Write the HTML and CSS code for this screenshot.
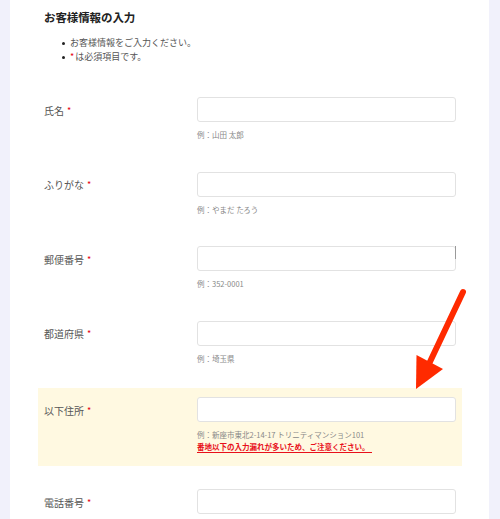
FILE: index.html
```html
<!DOCTYPE html>
<html lang="ja">
<head>
<meta charset="utf-8">
<link rel="stylesheet" href="styles.css">
</head>
<body>
<div class="panel">
  <h2 class="title">お客様情報の入力</h2>
  <ul class="notes">
    <li>お客様情報をご入力ください。</li>
    <li><span class="req">*</span>は必須項目です。</li>
  </ul>
  <div class="form">
    <div class="row">
      <div class="label">氏名<span class="req">*</span></div>
      <div class="field">
        <div class="input"></div>
        <div class="hint">例：山田 太郎</div>
      </div>
    </div>
    <div class="row">
      <div class="label">ふりがな<span class="req">*</span></div>
      <div class="field">
        <div class="input"></div>
        <div class="hint">例：やまだ たろう</div>
      </div>
    </div>
    <div class="row">
      <div class="label">郵便番号<span class="req">*</span></div>
      <div class="field">
        <div class="input caret"></div>
        <div class="hint">例：352-0001</div>
      </div>
    </div>
    <div class="row">
      <div class="label">都道府県<span class="req">*</span></div>
      <div class="field">
        <div class="input"></div>
        <div class="hint">例：埼玉県</div>
      </div>
    </div>
    <div class="row highlight">
      <div class="label">以下住所<span class="req">*</span></div>
      <div class="field">
        <div class="input"></div>
        <div class="hint">例：新座市東北2-14-17 トリニティマンション101</div>
        <div class="warn"><span>番地以下の入力漏れが多いため、ご注意ください。</span></div>
      </div>
    </div>
    <div class="row">
      <div class="label">電話番号<span class="req">*</span></div>
      <div class="field">
        <div class="input"></div>
      </div>
    </div>
  </div>
</div>
<svg class="arrow" width="500" height="519" viewBox="0 0 500 519">
  <line x1="463" y1="292" x2="428" y2="366" stroke="#ff2a00" stroke-width="6" stroke-linecap="round"/>
  <polygon points="416,389 416.5,355 443,369" fill="#ff2a00"/>
</svg>
</body>
</html>
```
FILE: styles.css
```css
html, body {
  margin: 0;
  padding: 0;
}
body {
  background: #f1f1fb;
  width: 500px;
  height: 519px;
  overflow: hidden;
  position: relative;
  font-family: "Noto Sans CJK JP", "Noto Sans", sans-serif;
  color: #555;
}
.panel {
  margin-left: 10px;
  width: 479px;
  height: 519px;
  background: #fff;
  box-sizing: border-box;
  padding: 9px 0 0 34px;
}
.title {
  margin: 0;
  font-size: 11.5px;
  line-height: 16px;
  font-weight: bold;
  color: #222;
  letter-spacing: -0.1px;
}
.notes {
  margin: 11px 0 0 0;
  padding-left: 26px;
  font-size: 9px;
  line-height: 14px;
  color: #555;
}
.notes li {
  list-style: none;
  position: relative;
}
.notes li::before {
  content: "";
  position: absolute;
  left: -8px;
  top: 6px;
  width: 3px;
  height: 3px;
  border-radius: 50%;
  background: #222;
}
.req {
  color: #e60012;
  font-size: 9px;
  margin-left: 3px;
}
.notes .req {
  margin-left: 0;
  margin-right: 1px;
}
.form {
  margin-top: 33px;
  display: flex;
  flex-direction: column;
  gap: 31.5px;
}
.row {
  display: flex;
  align-items: flex-start;
}
.label {
  width: 153px;
  height: 25px;
  display: flex;
  align-items: center;
  font-size: 10px;
  color: #555;
  padding-top: 1px;
  box-sizing: border-box;
}
.field {
  width: 259px;
}
.input {
  height: 25px;
  box-sizing: border-box;
  border: 1px solid #e2e2e2;
  border-radius: 3px;
  background: #fff;
  position: relative;
}
.caret::after {
  content: "";
  position: absolute;
  right: -1px;
  top: -1px;
  width: 1.5px;
  height: 13px;
  background: #9a9a9a;
}
.hint {
  margin-top: 8px;
  font-size: 7.5px;
  line-height: 10px;
  color: #888;
  white-space: nowrap;
}
.highlight {
  background: #fff9e1;
  margin: -7px 0 -8.5px -6px;
  padding: 9px 6px 13px 6px;
  width: 424px;
  box-sizing: border-box;
}
.warn {
  margin-top: 2px;
  font-size: 7.5px;
  line-height: 10px;
  font-weight: bold;
  color: #e8101a;
  white-space: nowrap;
}
.warn span {
  display: inline-block;
  border-bottom: 1px solid #e8101a;
  padding-right: 2px;
}
.arrow {
  position: absolute;
  left: 0;
  top: 0;
  pointer-events: none;
}
```
